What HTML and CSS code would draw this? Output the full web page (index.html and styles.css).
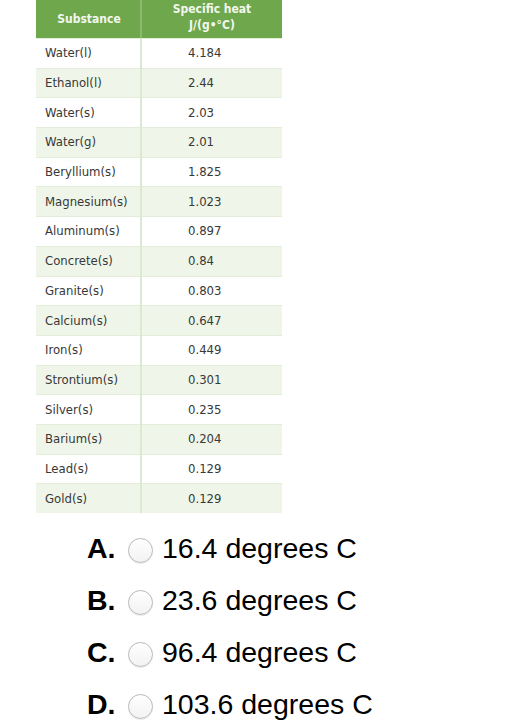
FILE: index.html
```html
<!DOCTYPE html>
<html>
<head>
<meta charset="utf-8">
<link rel="stylesheet" href="styles.css">
</head>
<body>
<div class="page">
  <div class="heat">
    <div class="row head">
      <div class="c1">Substance</div>
      <div class="c2">Specific heat<br>J/(g•°C)</div>
    </div>
    <div class="row"><div class="c1">Water(l)</div><div class="c2">4.184</div></div>
    <div class="row alt"><div class="c1">Ethanol(l)</div><div class="c2">2.44</div></div>
    <div class="row"><div class="c1">Water(s)</div><div class="c2">2.03</div></div>
    <div class="row alt"><div class="c1">Water(g)</div><div class="c2">2.01</div></div>
    <div class="row"><div class="c1">Beryllium(s)</div><div class="c2">1.825</div></div>
    <div class="row alt"><div class="c1">Magnesium(s)</div><div class="c2">1.023</div></div>
    <div class="row"><div class="c1">Aluminum(s)</div><div class="c2">0.897</div></div>
    <div class="row alt"><div class="c1">Concrete(s)</div><div class="c2">0.84</div></div>
    <div class="row"><div class="c1">Granite(s)</div><div class="c2">0.803</div></div>
    <div class="row alt"><div class="c1">Calcium(s)</div><div class="c2">0.647</div></div>
    <div class="row"><div class="c1">Iron(s)</div><div class="c2">0.449</div></div>
    <div class="row alt"><div class="c1">Strontium(s)</div><div class="c2">0.301</div></div>
    <div class="row"><div class="c1">Silver(s)</div><div class="c2">0.235</div></div>
    <div class="row alt"><div class="c1">Barium(s)</div><div class="c2">0.204</div></div>
    <div class="row"><div class="c1">Lead(s)</div><div class="c2">0.129</div></div>
    <div class="row alt"><div class="c1">Gold(s)</div><div class="c2">0.129</div></div>
  </div>

  <div class="options">
    <div class="opt"><span class="letter">A.</span><span class="radio"></span><span class="txt">16.4 degrees C</span></div>
    <div class="opt"><span class="letter">B.</span><span class="radio"></span><span class="txt">23.6 degrees C</span></div>
    <div class="opt"><span class="letter">C.</span><span class="radio"></span><span class="txt">96.4 degrees C</span></div>
    <div class="opt"><span class="letter">D.</span><span class="radio"></span><span class="txt">103.6 degrees C</span></div>
  </div>
</div>
</body>
</html>
```

FILE: styles.css
```css
html, body {
  margin: 0;
  padding: 0;
  background: #ffffff;
}

.page {
  padding-left: 36px;
}

.heat {
  width: 246px;
  display: flex;
  flex-direction: column;
  font-family: "Liberation Sans Narrow", "DejaVu Sans Condensed", "Roboto Condensed", "Liberation Sans", sans-serif;
  font-stretch: condensed;
  color: #383838;
  font-size: 13px;
}

.row {
  display: flex;
  height: 29.6875px;
  box-shadow: inset 0 1px 0 #e2eed9;
}

.row.alt {
  background: #eff6e9;
}

.row .c1 {
  width: 106px;
  flex: none;
  display: flex;
  align-items: center;
  padding-left: 9px;
  box-sizing: border-box;
  box-shadow: inset -2px 0 0 #dbe9d0;
}

.row .c2 {
  flex: 1;
  display: flex;
  align-items: center;
  padding-left: 46px;
}

.row.head {
  height: 38px;
  background: #6fa74d;
  color: #f2f7ee;
  font-weight: bold;
  font-size: 12px;
  box-shadow: none;
  line-height: 16px;
}

.row.head .c1 {
  justify-content: center;
  padding-left: 0;
  box-shadow: inset -2px 0 0 #8cba6e;
}

.row.head .c2 {
  justify-content: center;
  text-align: center;
  padding-left: 0;
  padding-bottom: 5px;
}

.options {
  margin-top: 9px;
  padding-left: 51px;
  font-family: "Liberation Sans", Arial, sans-serif;
  font-size: 28.5px;
  color: #000;
}

.opt {
  display: flex;
  align-items: center;
  height: 52px;
}

.letter {
  font-weight: bold;
  width: 41px;
  flex: none;
}

.radio {
  flex: none;
  width: 23px;
  height: 23px;
  border-radius: 50%;
  border: 1px solid #b9b9b9;
  background: linear-gradient(#ffffff, #f2f2f2);
  box-shadow: inset 0 1px 1px rgba(255,255,255,0.9), 0 1px 1px rgba(0,0,0,0.08);
  margin-top: 5px;
  margin-right: 9px;
}

.txt {
  white-space: nowrap;
}
```
